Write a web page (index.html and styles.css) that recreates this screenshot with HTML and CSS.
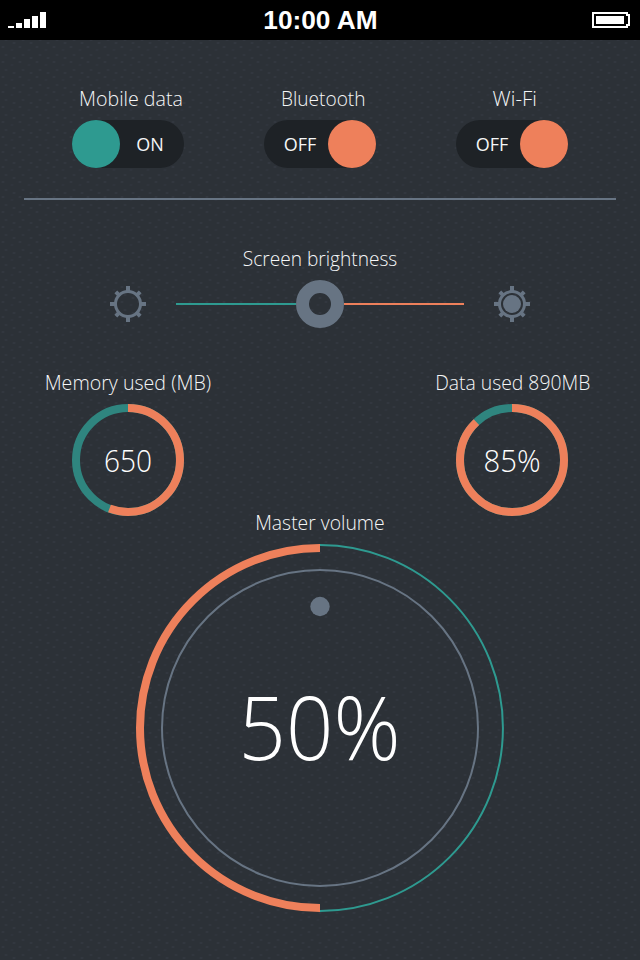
FILE: index.html
```html
<!DOCTYPE html>
<html lang="en">
<head>
<meta charset="utf-8">
<title>Settings</title>
<link rel="stylesheet" href="styles.css">
</head>
<body>
<header class="status">
  <svg class="signal" width="38" height="16" viewBox="0 0 38 16" fill="#fff"><path d="M0 14h6v2H0zM8 11h6v5H8zM16 7h6v9h-6zM24 4h6v12h-6zM32 0h6v16h-6z"/></svg>
  <time class="clock">10:00 AM</time>
  <svg class="battery" width="38" height="16" viewBox="0 0 38 16" shape-rendering="crispEdges"><path fill="#fff" fill-rule="evenodd" d="M0 0h36v2h2v12h-2v2H0zM2 2v12h32v-2h2V4h-2V2z"/><path fill="#fff" d="M4 4h28v8H4z"/></svg>
</header>
<main>
  <section class="toggles">
    <div class="item">
      <h2 class="label mobile">Mobile data</h2>
      <div class="toggle on"><i class="knob"></i><span>ON</span></div>
    </div>
    <div class="item">
      <h2 class="label bluetooth">Bluetooth</h2>
      <div class="toggle off"><span>OFF</span><i class="knob"></i></div>
    </div>
    <div class="item">
      <h2 class="label wifi">Wi-Fi</h2>
      <div class="toggle off"><span>OFF</span><i class="knob"></i></div>
    </div>
  </section>
  <section class="brightness">
    <h2 class="label screen">Screen brightness</h2>
    <div class="slider">
      <svg class="gear" width="36" height="36" viewBox="-18 -18 36 36" fill="none" stroke="#677483">
        <circle r="12.5" stroke-width="3"/>
        <path stroke-width="4" d="M0-18v5M0 13v5M-18 0h5M13 0h5M-12.2-12.2l4 4M12.2-12.2l-4 4M-12.2 12.2l4-4M12.2 12.2l-4-4"/>
      </svg>
      <div class="track"><i class="low"></i><i class="handle"></i><i class="high"></i></div>
      <svg class="gear" width="36" height="36" viewBox="-18 -18 36 36" fill="none" stroke="#677483">
        <circle r="12.5" stroke-width="3"/>
        <circle r="9" fill="#677483" stroke="none"/>
        <path stroke-width="4" d="M0-18v5M0 13v5M-18 0h5M13 0h5M-12.2-12.2l3.5 3.5M12.2-12.2l-3.5 3.5M-12.2 12.2l3.5-3.5M12.2 12.2l-3.5-3.5"/>
      </svg>
    </div>
  </section>
  <section class="usage">
    <div class="item">
      <h2 class="label memory">Memory used (MB)</h2>
      <svg class="ring" width="112" height="112" viewBox="0 0 112 112">
        <circle class="rest" cx="56" cy="56" r="52"/>
        <circle class="used" cx="56" cy="56" r="52" pathLength="100" stroke-dasharray="55.8 100" transform="rotate(-90 56 56)"/>
        <text class="value" x="32" y="67.5" textLength="48" lengthAdjust="spacingAndGlyphs">650</text>
      </svg>
    </div>
    <div class="item">
      <h2 class="label data">Data used 890MB</h2>
      <svg class="ring" width="112" height="112" viewBox="0 0 112 112">
        <circle class="rest" cx="56" cy="56" r="52"/>
        <circle class="used" cx="56" cy="56" r="52" pathLength="100" stroke-dasharray="88 100" transform="rotate(-90 56 56)"/>
        <text class="value" x="27.5" y="67.5" textLength="57" lengthAdjust="spacingAndGlyphs">85%</text>
      </svg>
    </div>
  </section>
  <section class="volume">
    <h2 class="label master">Master volume</h2>
    <svg class="dial" width="368" height="368" viewBox="0 0 368 368" fill="none">
      <path stroke="#2e9a90" stroke-width="2" d="M184 1a183 183 0 0 1 0 366"/>
      <path stroke="#ee805b" stroke-width="8" d="M184 4a180 180 0 0 0 0 360"/>
      <circle cx="184" cy="184" r="158" stroke="#677483" stroke-width="2"/>
      <circle cx="184" cy="62.5" r="9.7" fill="#677483"/>
      <text class="big" x="102.5" y="216" textLength="162" lengthAdjust="spacingAndGlyphs">50%</text>
    </svg>
  </section>
</main>
</body>
</html>
```
FILE: styles.css
```css
* { box-sizing: border-box; }

body {
  margin: 0;
  width: 640px;
  height: 960px;
  overflow: hidden;
  color: #f5f6f7;
  font-family: "Open Sans", "Noto Sans", sans-serif;
  font-weight: 300;
  background-color: #2c3137;
  background-image:
    radial-gradient(ellipse 2px 1px at 3px 2px, #32373f 70%, transparent),
    radial-gradient(ellipse 2px 1px at 12px 5px, #2f343c 70%, transparent),
    radial-gradient(ellipse 2px 1px at 6px 10px, #31363e 70%, transparent),
    radial-gradient(ellipse 2px 1px at 14px 13px, #32373f 70%, transparent);
  background-size: 17px 15px;
}

svg { display: block; }

.status {
  height: 40px;
  padding: 0 10px 0 8px;
  display: flex;
  align-items: center;
  justify-content: space-between;
  background: #000;
}

.clock {
  font: bold 25px/40px "Liberation Sans", sans-serif;
  color: #fff;
  transform: translateX(1px) scaleX(1.05);
}

.label {
  margin: 0;
  height: 28px;
  font-size: 20px;
  font-weight: 300;
  line-height: 28px;
  text-align: center;
  white-space: nowrap;
}

/* Optical width and centring of each caption */
.mobile { transform: translate(3px, 1px) scaleX(.98); }
.bluetooth { transform: translate(3px, 1px) scaleX(.955); }
.wifi { transform: translate(3px, 1px) scaleX(1.02); }
.screen { transform: translate(0, 1px) scaleX(.956); }
.memory { transform: translate(0, 1px) scaleX(.98); }
.data { transform: translate(.5px, 1px) scaleX(.967); }
.master { transform: translate(0, 1px) scaleX(.968); }

.item {
  width: 192px;
  display: flex;
  flex-direction: column;
  align-items: center;
}

.toggles {
  height: 160px;
  margin: 0 24px;
  padding: 44px 8px 0;
  display: flex;
  border-bottom: 2px solid #677483;
}

.toggles .label { margin-bottom: 8px; }

.toggle {
  width: 112px;
  height: 48px;
  border-radius: 24px;
  display: flex;
  align-items: center;
  background: #1e2226;
  font-size: 18px;
  font-weight: 400;
}

.toggle span {
  flex: 1;
  text-align: center;
  line-height: 48px;
}

.on span { padding-right: 4px; }
.off span { padding-left: 8px; }

.knob {
  width: 48px;
  height: 48px;
  border-radius: 50%;
  background: #ee805b;
}

.on .knob { background: #2e9a90; }

.brightness { padding-top: 44px; }

.slider {
  height: 48px;
  margin-top: 8px;
  padding: 0 110px;
  display: flex;
  align-items: center;
  justify-content: space-between;
}

.track {
  width: 288px;
  display: flex;
  align-items: center;
}

.low, .high { flex: 1; height: 2px; background: #2e9a90; }
.high { background: #ee805b; }

.handle {
  width: 48px;
  height: 48px;
  border: 13px solid #677483;
  border-radius: 50%;
}

.usage {
  height: 188px;
  padding: 40px 32px 0;
  display: flex;
  justify-content: space-between;
}

.usage .ring { margin-top: 8px; }

.ring circle { fill: none; stroke-width: 8; }
.rest { stroke: #2f857f; }
.used { stroke: #ee805b; }
.value { font-size: 30.5px; fill: #fff; }

.volume {
  margin-top: -8px;
  display: flex;
  flex-direction: column;
  align-items: center;
}

.dial { margin-top: 8px; }
.big { font-size: 88px; fill: #fff; }
```
